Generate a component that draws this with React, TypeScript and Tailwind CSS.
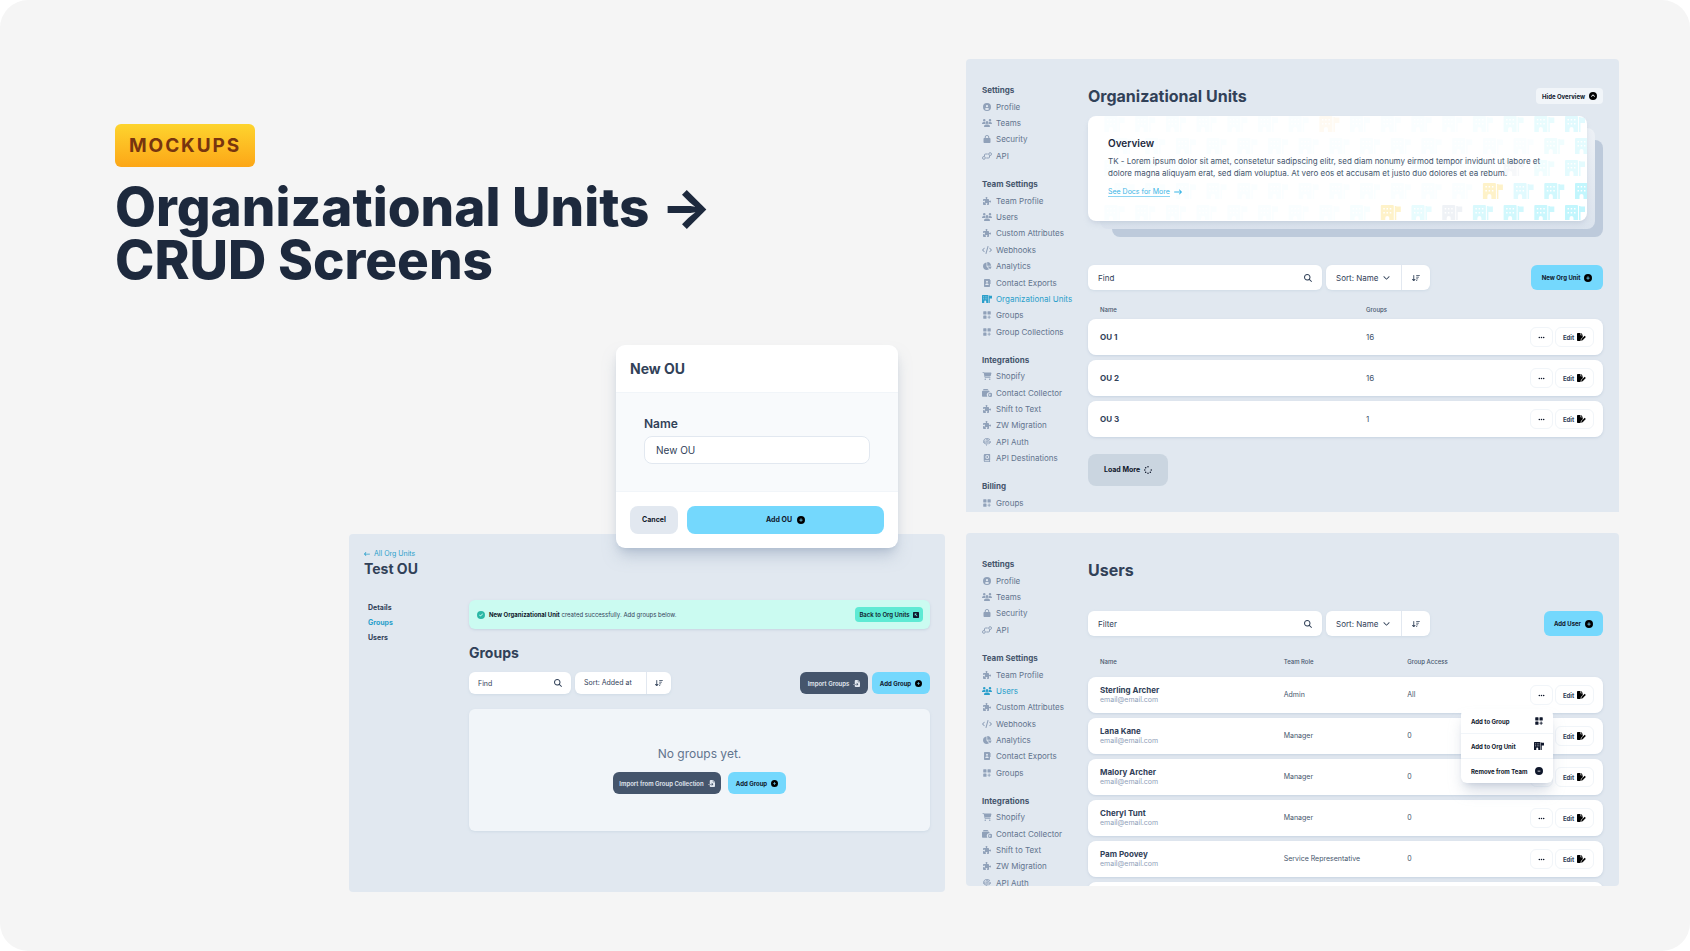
import type { ComponentType, ReactNode, SVGProps } from "react";
import {
  FaArrowDownWideShort,
  FaArrowLeftLong,
  FaArrowRightLong,
  FaCartShopping,
  FaChartPie,
  FaChevronDown,
  FaCircleCheck,
  FaCircleChevronUp,
  FaCircleMinus,
  FaCirclePlus,
  FaCircleUser,
  FaCode,
  FaEllipsis,
  FaFileImport,
  FaFingerprint,
  FaLock,
  FaMagnifyingGlass,
  FaPuzzlePiece,
  FaSpinner,
  FaUsers,
} from "react-icons/fa6";

type Icon = ComponentType<{ className?: string }>;
type SvgProps = SVGProps<SVGSVGElement>;

/* ---------- Custom icons ---------- */

const ORG_UNIT_PATH =
  "M1 0h11a1 1 0 0 1 1 1v15H8.500v-3a2 2 0 0 0-4 0v3H0V1a1 1 0 0 1 1-1zM2.500 3v1.500H4V3zM5.700 3v1.500h1.500V3zM9 3v1.500h1.500V3zM2.500 7v1.500H4V7zM5.700 7v1.500h1.500V7zM9 7v1.500h1.500V7zM14 1h1.500v0.500H20v5.500h-4.500v9H14z";

function OrgUnitIcon(props: SvgProps) {
  return (
    <svg viewBox="0 0 20 16" fill="currentColor" aria-hidden="true" {...props}>
      <path fillRule="evenodd" d={ORG_UNIT_PATH} />
    </svg>
  );
}

function GroupsIcon(props: SvgProps) {
  return (
    <svg viewBox="0 0 16 16" fill="currentColor" aria-hidden="true" {...props}>
      <rect x="0.500" y="0.500" width="6.500" height="6.500" rx="1.200" />
      <rect x="9" y="0.500" width="6.500" height="6.500" rx="1.200" />
      <rect x="0.500" y="9" width="6.500" height="6.500" rx="1.200" />
      <path d="M11.300 9h1.900v2.300h2.300v1.900h-2.300v2.300h-1.900v-2.300H9v-1.900h2.300z" />
    </svg>
  );
}

function ApiIcon(props: SvgProps) {
  return (
    <svg viewBox="0 0 20 16" fill="none" stroke="currentColor" strokeWidth="2" aria-hidden="true" {...props}>
      <circle cx="3.800" cy="11.800" r="2.800" />
      <circle cx="16.200" cy="4.200" r="2.800" />
      <path d="M5 8.500V6a2 2 0 0 1 2-2h4.500M15 7.500V10a2 2 0 0 1-2 2H8.500" />
    </svg>
  );
}

function ContactBookIcon(props: SvgProps) {
  return (
    <svg viewBox="0 0 16 16" fill="currentColor" aria-hidden="true" {...props}>
      <path
        fillRule="evenodd"
        d="M3.500 0h9A1.500 1.500 0 0 1 14 1.500v13a1.500 1.500 0 0 1-1.500 1.500h-9A1.500 1.500 0 0 1 2 14.500v-13A1.500 1.500 0 0 1 3.500 0zM8 3.500a2 2 0 1 0 0 4 2 2 0 0 0 0-4zM4.500 12h7c0-2-1.200-3.200-2.700-3.200H7.200C5.700 8.800 4.500 10 4.500 12z"
      />
      <path d="M14.600 2.500H16v3h-1.400zM14.600 6.500H16v3h-1.400z" />
    </svg>
  );
}

function CollectorIcon(props: SvgProps) {
  return (
    <svg viewBox="0 0 20 16" fill="currentColor" aria-hidden="true" {...props}>
      <path d="M3 0h8l2.500 2.500H2zM1.500 3.500h12A1.500 1.500 0 0 1 15 5v1.500a5 5 0 0 0-4.500 8v1H1.500A1.500 1.500 0 0 1 0 14V5a1.500 1.500 0 0 1 1.500-1.500z" />
      <path
        fillRule="evenodd"
        d="M15.500 7.500a4.300 4.300 0 1 1 0 8.500 4.300 4.300 0 0 1 0-8.500zm-.7 2v1.700h-1.600v1.300h1.600v1.700h1.400v-1.700h1.600v-1.300h-1.600V9.500z"
      />
    </svg>
  );
}

function DestinationsIcon(props: SvgProps) {
  return (
    <svg viewBox="0 0 16 16" fill="currentColor" aria-hidden="true" {...props}>
      <path
        fillRule="evenodd"
        d="M4 0h9.500a.8.8 0 0 1 .8.8v11a.8.8 0 0 1-.6.800v1.800h.6V16H4a2.500 2.500 0 0 1-2.500-2.500v-11A2.500 2.500 0 0 1 4 0zm0 12.600a.9.9 0 0 0 0 1.800h8v-1.800zM8.500 2.200a3.800 3.800 0 1 0 0 7.600 3.800 3.800 0 0 0 0-7.600z"
      />
      <circle cx="8.500" cy="6" r="1.800" />
    </svg>
  );
}

function FileEditIcon(props: SvgProps) {
  return (
    <svg viewBox="0 0 18 16" fill="currentColor" aria-hidden="true" {...props}>
      <path d="M1.500 0H7v4.500h4.500v4L7.800 12l-.8 4H1.500A1.500 1.500 0 0 1 0 14.500v-13A1.500 1.500 0 0 1 1.500 0zM8 0l3.500 3.500H8z" />
      <path d="M15.400 5.600l2.200 2.200-6.300 6.600-3 .900.800-3.100z" />
    </svg>
  );
}

function SquareArrowIcon(props: SvgProps) {
  return (
    <svg viewBox="0 0 16 16" fill="currentColor" aria-hidden="true" {...props}>
      <path
        fillRule="evenodd"
        d="M2 0h12a2 2 0 0 1 2 2v12a2 2 0 0 1-2 2H2a2 2 0 0 1-2-2V2a2 2 0 0 1 2-2zm2.500 4v6l2-2 4 4L12 10.500l-4-4 2-2.500z"
      />
    </svg>
  );
}

/* ---------- Navigation ---------- */

interface NavItem {
  label: string;
  icon: Icon;
}

interface NavSection {
  title: string;
  height: string;
  items: NavItem[];
}

const settings: NavSection = {
  title: "Settings",
  height: "min-h-[82px]",
  items: [
    { label: "Profile", icon: FaCircleUser },
    { label: "Teams", icon: FaUsers },
    { label: "Security", icon: FaLock },
    { label: "API", icon: ApiIcon },
  ],
};

const teamItems: NavItem[] = [
  { label: "Team Profile", icon: FaPuzzlePiece },
  { label: "Users", icon: FaUsers },
  { label: "Custom Attributes", icon: FaPuzzlePiece },
  { label: "Webhooks", icon: FaCode },
  { label: "Analytics", icon: FaChartPie },
  { label: "Contact Exports", icon: ContactBookIcon },
];

const integrations: NavSection = {
  title: "Integrations",
  height: "min-h-[114px]",
  items: [
    { label: "Shopify", icon: FaCartShopping },
    { label: "Contact Collector", icon: CollectorIcon },
    { label: "Shift to Text", icon: FaPuzzlePiece },
    { label: "ZW Migration", icon: FaPuzzlePiece },
    { label: "API Auth", icon: FaFingerprint },
    { label: "API Destinations", icon: DestinationsIcon },
  ],
};

const orgUnitNav: NavSection[] = [
  settings,
  {
    title: "Team Settings",
    height: "min-h-[164px]",
    items: [
      ...teamItems,
      { label: "Organizational Units", icon: OrgUnitIcon },
      { label: "Groups", icon: GroupsIcon },
      { label: "Group Collections", icon: GroupsIcon },
    ],
  },
  integrations,
  { title: "Billing", height: "min-h-[33px]", items: [{ label: "Groups", icon: GroupsIcon }] },
];

const usersNav: NavSection[] = [
  settings,
  {
    title: "Team Settings",
    height: "min-h-[131px]",
    items: [...teamItems, { label: "Groups", icon: GroupsIcon }],
  },
  integrations,
];

function SideNav({ label, sections, active }: { label: string; sections: NavSection[]; active: string }) {
  return (
    <nav aria-label={label} className="flex w-[106px] shrink-0 flex-col gap-3 pt-[23px]">
      {sections.map((section) => (
        <ul key={section.title} className={`grid auto-rows-fr ${section.height}`}>
          <li className="flex items-center text-[8px] leading-4 font-bold text-slate-600">{section.title}</li>
          {section.items.map(({ label: text, icon: ItemIcon }) => (
            <li key={text} className="flex">
              <a
                href="#"
                aria-current={text === active ? "page" : undefined}
                className={`flex items-center gap-1 text-[8px] leading-4 whitespace-nowrap ${
                  text === active ? "text-[#2a9fcb]" : "text-slate-500"
                }`}
              >
                <span className={text === active ? "" : "text-slate-400"}>
                  <ItemIcon className="h-2 w-[10px]" />
                </span>
                {text}
              </a>
            </li>
          ))}
        </ul>
      ))}
    </nav>
  );
}

/* ---------- Shared controls ---------- */

function PrimaryButton({ children, className }: { children: ReactNode; className: string }) {
  return (
    <button
      type="button"
      className={`flex items-center justify-center bg-[#74d8fd] font-bold whitespace-nowrap text-slate-900 ${className}`}
    >
      {children}
    </button>
  );
}

function SearchBox({ id, label, className }: { id: string; label: string; className: string }) {
  return (
    <div className={`flex items-center bg-white shadow-sm shadow-slate-300/60 ${className}`}>
      <label htmlFor={id} className="sr-only">
        {label}
      </label>
      <input
        id={id}
        type="text"
        placeholder={label}
        className="h-full w-full min-w-0 flex-1 bg-transparent outline-none placeholder:text-slate-700"
      />
      <FaMagnifyingGlass className="size-2 shrink-0 text-slate-700" />
    </div>
  );
}

function SortControl({ id, value, chevron, className }: { id: string; value: string; chevron?: boolean; className: string }) {
  return (
    <div className={`flex items-stretch bg-white text-slate-700 shadow-sm shadow-slate-300/60 ${className}`}>
      <label className="flex items-center gap-1" htmlFor={id}>
        <span className="sr-only">Sort order</span>
        <select id={id} className="h-full appearance-none bg-transparent outline-none">
          <option>{value}</option>
        </select>
        {chevron && <FaChevronDown className="size-[7px]" />}
      </label>
      <button
        type="button"
        aria-label="Reverse sort direction"
        className="flex flex-1 items-center justify-center border-l border-slate-200"
      >
        <FaArrowDownWideShort className="size-2" />
      </button>
    </div>
  );
}

function RowActions({ name, children }: { name: string; children?: ReactNode }) {
  return (
    <div className="relative flex justify-end gap-[2px] pr-[9px]">
      <button
        type="button"
        aria-label={`More actions for ${name}`}
        className="flex h-5 w-[23px] items-center justify-center rounded-md border border-slate-100"
      >
        <FaEllipsis className="size-[7px] text-slate-900" />
      </button>
      <button
        type="button"
        className="flex h-5 w-[39px] items-center justify-center gap-[3px] rounded-md border border-slate-100 text-[6px] font-bold text-slate-700"
      >
        Edit
        <FileEditIcon className="h-2 w-[9px] text-black" />
      </button>
      {children}
    </div>
  );
}

/* ---------- Organizational units ---------- */

interface PatternRow {
  y: number;
  right: number;
  base: number;
  fade: number;
  accents: Record<number, string>;
}

const patternRows: PatternRow[] = [
  { y: 0, right: 477, base: 0.2, fade: 0.05, accents: { 8: "#ffedd5" } },
  { y: 22, right: 487, base: 0.18, fade: 0.08, accents: {} },
  { y: 44, right: 477, base: 0.18, fade: 0.08, accents: { 2: "#e2e8f0" } },
  { y: 67, right: 487, base: 0.4, fade: 0.1, accents: { 3: "#fcd34d" } },
  { y: 89, right: 477, base: 0.4, fade: 0.05, accents: { 4: "#cbd5e1", 6: "#fcd34d" } },
];

function BuildingPattern() {
  return (
    <svg className="absolute top-0 right-0" width="499" height="104" viewBox="0 0 499 104" aria-hidden="true">
      {patternRows.flatMap((row) =>
        Array.from({ length: 16 }, (_, i) => {
          const accent = row.accents[i];
          const opacity = Math.max(row.base - i * row.fade, accent ? 0.3 : 0.03);
          return (
            <path
              key={`${row.y}-${i}`}
              transform={`translate(${row.right - i * 30.7} ${row.y})`}
              d={ORG_UNIT_PATH}
              fillRule="evenodd"
              fill={accent ?? "#67e8f9"}
              opacity={opacity}
            />
          );
        }),
      )}
    </svg>
  );
}

const orgUnits = [
  { name: "OU 1", groups: 16 },
  { name: "OU 2", groups: 16 },
  { name: "OU 3", groups: 1 },
];

function OrgUnitsScreen() {
  return (
    <section className="flex overflow-hidden rounded-t-[4px] bg-[#e1e8f0] px-4 pb-px">
      <SideNav label="Organizational units navigation" sections={orgUnitNav} active="Organizational Units" />
      <div className="flex min-w-0 flex-1 flex-col pt-[26px]">
        <header className="flex items-center justify-between">
          <h2 className="text-[16px] leading-[22px] font-bold text-slate-700">Organizational Units</h2>
          <button
            type="button"
            className="flex h-4 items-center gap-1 rounded-[4px] bg-slate-100 px-[6px] text-[6px] font-bold text-slate-900"
          >
            Hide Overview
            <FaCircleChevronUp className="size-2 text-black" />
          </button>
        </header>

        <div className="relative mt-[9px] pr-4 pb-4">
          <div className="absolute top-6 right-0 bottom-0 left-6 rounded-lg bg-[#bdcadb]" />
          <div className="absolute top-3 right-2 bottom-2 left-3 rounded-lg bg-linear-to-b from-[#edf1f6] to-[#dbe3ed]" />
          <article className="relative overflow-hidden rounded-lg bg-white px-5 pt-[19px] pb-6 shadow-md shadow-slate-400/20">
            <BuildingPattern />
            <div className="relative">
              <h3 className="text-[10px] leading-4 font-semibold text-slate-800">Overview</h3>
              <p className="mt-1 mr-4 text-[8px] leading-3 text-slate-600">
                TK - Lorem ipsum dolor sit amet, consetetur sadipscing elitr, sed diam nonumy eirmod tempor invidunt ut labore
                et dolore magna aliquyam erat, sed diam voluptua. At vero eos et accusam et justo duo dolores et ea rebum.
              </p>
              <a href="#" className="mt-2 flex items-center gap-1 text-[7px] text-[#3bb5e6]">
                <span className="border-b border-[#8ed5f2] leading-[9px]">See Docs for More</span>
                <FaArrowRightLong className="size-2" />
              </a>
            </div>
          </article>
        </div>

        <div className="mt-[28px] flex h-[25px] items-stretch gap-1">
          <SearchBox id="find-org-unit" label="Find" className="w-[234px] rounded-md px-[10px] text-[8px]" />
          <SortControl id="sort-org-units" value="Sort: Name" chevron className="w-[104px] rounded-md pl-[10px] text-[8px] [&>label]:w-[65px]" />
          <PrimaryButton className="ml-auto w-[72px] gap-1 rounded-md text-[6px]">
            New Org Unit
            <FaCirclePlus className="size-2 text-black" />
          </PrimaryButton>
        </div>

        <table className="mt-[11px] w-full table-fixed border-separate border-spacing-x-0 border-spacing-y-[5px]">
          <thead>
            <tr className="h-2 text-left text-[6px] leading-2 text-slate-600">
              <th scope="col" className="w-[54%] p-0 pl-3 font-medium">Name</th>
              <th scope="col" className="p-0 font-medium">Groups</th>
              <th scope="col" className="p-0"><span className="sr-only">Actions</span></th>
            </tr>
          </thead>
          <tbody>
            {orgUnits.map((unit) => (
              <tr key={unit.name} className="h-9 rounded-lg text-[8px] text-slate-600 shadow-sm shadow-slate-300">
                <td className="rounded-l-lg bg-white p-0 pl-3 font-bold text-slate-700">{unit.name}</td>
                <td className="bg-white p-0">{unit.groups}</td>
                <td className="rounded-r-lg bg-white p-0">
                  <RowActions name={unit.name} />
                </td>
              </tr>
            ))}
          </tbody>
        </table>

        <button
          type="button"
          className="mt-3 flex h-8 w-20 items-center justify-center gap-1 rounded-lg bg-[#cad5e0] text-[7px] font-bold text-slate-900"
        >
          Load More
          <FaSpinner className="size-2" />
        </button>
      </div>
    </section>
  );
}

/* ---------- Users ---------- */

const users = [
  { name: "Sterling Archer", role: "Admin", access: "All" },
  { name: "Lana Kane", role: "Manager", access: "0" },
  { name: "Malory Archer", role: "Manager", access: "0" },
  { name: "Cheryl Tunt", role: "Manager", access: "0" },
  { name: "Pam Poovey", role: "Service Representative", access: "0" },
];

const menuItems: { label: string; icon: Icon }[] = [
  { label: "Add to Group", icon: GroupsIcon },
  { label: "Add to Org Unit", icon: OrgUnitIcon },
  { label: "Remove from Team", icon: FaCircleMinus },
];

function UserMenu() {
  return (
    <ul className="absolute top-6 right-[50px] z-10 w-[92px] divide-y divide-slate-100 rounded-md bg-white shadow-lg shadow-slate-400/40">
      {menuItems.map(({ label, icon: ItemIcon }) => (
        <li key={label}>
          <button
            type="button"
            className="flex h-6 w-full items-center justify-between pr-[9px] pl-[10px] text-[6px] font-bold whitespace-nowrap text-slate-900"
          >
            {label}
            <ItemIcon className="h-2 w-[10px] shrink-0" />
          </button>
        </li>
      ))}
    </ul>
  );
}

function UsersScreen() {
  return (
    <section className="flex h-[353px] overflow-hidden rounded-[4px] bg-[#e1e8f0] px-4">
      <SideNav label="Users navigation" sections={usersNav} active="Users" />
      <div className="flex min-w-0 flex-1 flex-col pt-[26px]">
        <h2 className="text-[16px] leading-[22px] font-bold text-slate-700">Users</h2>

        <div className="mt-[30px] flex h-[25px] shrink-0 items-stretch gap-1">
          <SearchBox id="filter-users" label="Filter" className="w-[234px] rounded-md px-[10px] text-[8px]" />
          <SortControl id="sort-users" value="Sort: Name" chevron className="w-[104px] rounded-md pl-[10px] text-[8px] [&>label]:w-[65px]" />
          <PrimaryButton className="ml-auto w-[59px] gap-1 rounded-md text-[6px]">
            Add User
            <FaCirclePlus className="size-2 text-black" />
          </PrimaryButton>
        </div>

        <table className="mt-[11px] w-full table-fixed border-separate border-spacing-x-0 border-spacing-y-[5px]">
          <thead>
            <tr className="h-5 text-left text-[6px] leading-2 text-slate-600">
              <th scope="col" className="w-[38%] p-0 pl-3 font-medium">Name</th>
              <th scope="col" className="w-[24%] p-0 font-medium">Team Role</th>
              <th scope="col" className="p-0 font-medium">Group Access</th>
              <th scope="col" className="p-0"><span className="sr-only">Actions</span></th>
            </tr>
          </thead>
          <tbody>
            {users.map((user, index) => (
              <tr key={user.name} className="h-9 rounded-lg text-[7px] text-slate-600 shadow-sm shadow-slate-300">
                <td className="rounded-l-lg bg-white p-0 pl-3">
                  <div className="text-[8px] leading-[10px] font-bold text-slate-700">{user.name}</div>
                  <div className="leading-[10px] text-slate-400">email@email.com</div>
                </td>
                <td className="bg-white p-0">{user.role}</td>
                <td className="bg-white p-0">{user.access}</td>
                <td className="rounded-r-lg bg-white p-0">
                  <RowActions name={user.name}>{index === 0 && <UserMenu />}</RowActions>
                </td>
              </tr>
            ))}
            <tr className="h-9 rounded-lg shadow-sm shadow-slate-300">
              <td colSpan={4} className="rounded-lg bg-white p-0" />
            </tr>
          </tbody>
        </table>
      </div>
    </section>
  );
}

/* ---------- Single org unit ---------- */

const tabs = ["Details", "Groups", "Users"];

function OrgUnitDetailScreen() {
  return (
    <section className="ml-[234px] min-h-[358px] rounded-[4px] bg-[#e1e8f0] px-[15px] pt-[14px] pb-[59px]">
      <a href="#" className="flex items-center gap-1 text-[7px] leading-3 text-[#2a9fcb]">
        <FaArrowLeftLong className="size-[6px]" />
        All Org Units
      </a>
      <h2 className="mt-px text-[14px] leading-4 font-bold text-slate-700">Test OU</h2>

      <div className="mt-[23px] flex">
        <nav aria-label="Org unit sections" className="w-[105px] shrink-0 pl-1">
          <ul>
            {tabs.map((tab) => (
              <li key={tab}>
                <a
                  href="#"
                  aria-current={tab === "Groups" ? "page" : undefined}
                  className={`block text-[7px] leading-[15px] font-bold ${tab === "Groups" ? "text-[#2a9fcb]" : "text-slate-700"}`}
                >
                  {tab}
                </a>
              </li>
            ))}
          </ul>
        </nav>

        <div className="min-w-0 flex-1">
          <div
            role="status"
            className="flex h-[29px] items-center gap-1 rounded-md bg-[#cbfbf1] pr-[7px] pl-2 text-[6px] text-slate-700 shadow-sm shadow-slate-300"
          >
            <FaCircleCheck className="size-2 text-[#2bb8a6]" />
            <p>
              <strong className="font-bold text-slate-900">New Organizational Unit</strong> created successfully. Add groups
              below.
            </p>
            <button
              type="button"
              className="ml-auto flex h-[15px] w-[68px] items-center justify-center gap-[3px] rounded-[4px] bg-[#5eead4] text-[6px] font-semibold whitespace-nowrap text-slate-900"
            >
              Back to Org Units
              <SquareArrowIcon className="size-[6px]" />
            </button>
          </div>

          <h3 className="mt-4 text-[14px] leading-4 font-bold text-slate-700">Groups</h3>

          <div className="mt-[11px] flex h-[22px] items-stretch gap-1">
            <SearchBox id="find-group" label="Find" className="w-[102px] rounded-md px-[9px] text-[7px]" />
            <SortControl id="sort-groups" value="Sort: Added at" className="w-24 rounded-md pl-[9px] text-[7px] [&>label]:w-[62px]" />
            <button
              type="button"
              className="ml-auto flex w-[68px] items-center justify-center gap-1 rounded-md bg-slate-600 text-[6px] font-semibold whitespace-nowrap text-slate-200"
            >
              Import Groups
              <FaFileImport className="size-[7px]" />
            </button>
            <PrimaryButton className="w-[58px] gap-1 rounded-md text-[6px]">
              Add Group
              <FaCirclePlus className="size-[7px] text-black" />
            </PrimaryButton>
          </div>

          <div className="mt-[15px] flex flex-col items-center rounded-md bg-slate-100 py-[37px] shadow-sm shadow-slate-300/60">
            <p className="text-[12px] leading-4 text-slate-500">No groups yet.</p>
            <div className="mt-[10px] flex h-[22px] items-stretch gap-[7px]">
              <button
                type="button"
                className="flex w-[108px] items-center justify-center gap-1 rounded-md bg-slate-600 text-[6px] font-semibold whitespace-nowrap text-slate-200"
              >
                Import from Group Collection
                <FaFileImport className="size-[7px]" />
              </button>
              <PrimaryButton className="w-[58px] gap-1 rounded-md text-[6px]">
                Add Group
                <FaCirclePlus className="size-[7px] text-black" />
              </PrimaryButton>
            </div>
          </div>
        </div>
      </div>
    </section>
  );
}

/* ---------- New OU dialog ---------- */

function NewOrgUnitDialog() {
  return (
    <form
      aria-labelledby="new-ou-title"
      className="relative z-10 mt-[58px] mr-[47px] -mb-[14px] w-[282px] self-end overflow-hidden rounded-[9px] bg-white shadow-lg shadow-slate-400/50"
    >
      <h2 id="new-ou-title" className="px-[14px] pt-4 pb-[15px] text-[14px] leading-4 font-bold text-slate-700">
        New OU
      </h2>
      <div className="border-y border-slate-100 bg-slate-50 px-7 pt-[23px] pb-[27px]">
        <label htmlFor="new-ou-name" className="block text-[12px] leading-4 font-semibold text-slate-700">
          Name
        </label>
        <input
          id="new-ou-name"
          type="text"
          defaultValue="New OU"
          className="mt-1 h-7 w-full rounded-lg border border-slate-200 bg-white px-[11px] text-[10px] text-slate-700 outline-none"
        />
      </div>
      <div className="flex gap-[9px] p-[14px]">
        <button type="button" className="h-7 w-[48px] rounded-lg bg-slate-200 text-[7px] font-bold text-slate-900">
          Cancel
        </button>
        <PrimaryButton className="h-7 flex-1 gap-[5px] rounded-lg text-[7px]">
          Add OU
          <FaCirclePlus className="size-2 text-black" />
        </PrimaryButton>
      </div>
    </form>
  );
}

export default function App() {
  return (
    <div className="min-h-screen bg-white font-['Inter',sans-serif]">
      <main className="grid min-h-screen grid-cols-[830fr_653fr] items-start gap-[21px] rounded-[28px] bg-neutral-100 pt-[59px] pr-[71px] pb-[59px] pl-[115px]">
        <div className="flex flex-col pt-[65px]">
          <p className="self-start rounded-md bg-linear-to-b from-[#fdd42e] to-[#fca616] px-[14px] text-[19px] leading-[43px] font-bold tracking-widest text-[#78350f]">
            MOCKUPS
          </p>
          <h1 className="mt-[14px] text-[53px] leading-[53px] font-extrabold text-slate-800">
            Organizational Units →
            <br />
            CRUD Screens
          </h1>
          <NewOrgUnitDialog />
          <OrgUnitDetailScreen />
        </div>
        <div className="flex flex-col gap-[21px]">
          <OrgUnitsScreen />
          <UsersScreen />
        </div>
      </main>
    </div>
  );
}
